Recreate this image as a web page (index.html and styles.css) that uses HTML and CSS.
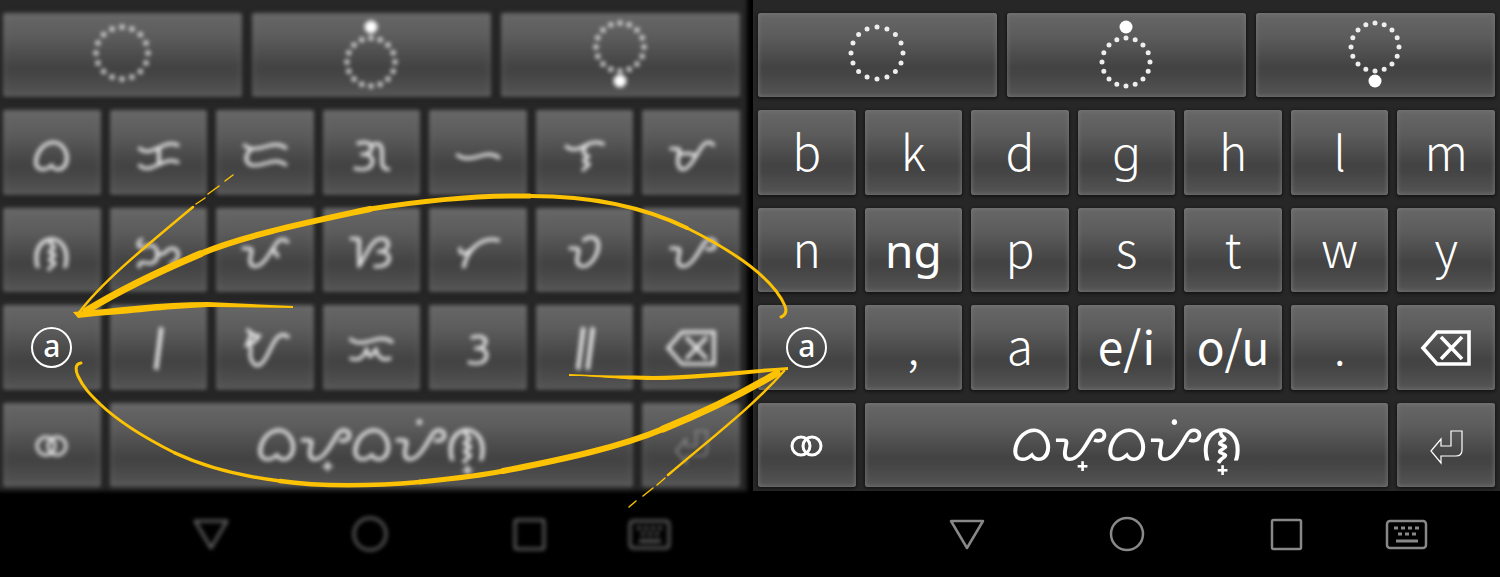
FILE: index.html
```html
<!DOCTYPE html>
<html lang="en">
<head>
<meta charset="utf-8">
<meta name="viewport" content="width=device-width, initial-scale=1">
<title>Baybayin keyboard layouts</title>
<link rel="stylesheet" href="styles.css">
</head>
<body>
<svg class="defs" aria-hidden="true">
  <symbol id="ring" viewBox="-35 -42 70 84"><circle class="dots" cx="-1" cy="-2" r="26" pathLength="16"/></symbol>
  <symbol id="ring-above" viewBox="-35 -42 70 84"><circle class="dots" cx="-1" cy="7" r="24" pathLength="16"/><circle class="solid" cx="-1" cy="-28" r="6.5"/></symbol>
  <symbol id="ring-below" viewBox="-35 -42 70 84"><circle class="dots" cx="-1" cy="-8" r="24" pathLength="16"/><circle class="solid" cx="-1" cy="26" r="6.5"/></symbol>
  <symbol id="vowel-sign" viewBox="-30 -30 60 60"><path class="line" stroke-width="3.6" d="M-18-18Q-14-12-6-11-10-4-18-2L-14-12M-15-1C-13 3-16 6-14 12-12 18-8 20-4 17 2 13 5 0 11-8 15-13 20-14 24-9"/></symbol>
  <symbol id="backspace" viewBox="-30 -30 60 60"><path class="line" stroke-width="3.6" d="M-23 1-9-15H23V17H-9ZM-5-10 16 12M16-10-5 12"/></symbol>
  <symbol id="enter" viewBox="-30 -30 60 60"><path class="line" stroke-width="1.2" d="M-15 6-5-6V1H5V-14H16V5Q16 11 10 11H-5V18Z"/></symbol>
  <symbol id="globe" viewBox="-30 -30 60 60"><circle class="line" stroke-width="3" cx="-6" cy="1" r="9"/><circle class="line" stroke-width="3" cx="5" cy="1" r="9"/></symbol>
  <symbol id="back" viewBox="-24 -24 48 48"><path class="line" stroke-width="2.5" stroke-linejoin="round" d="M-16-13H16L0 14Z"/></symbol>
  <symbol id="home" viewBox="-24 -24 48 48"><circle class="line" stroke-width="2.5" cx="-1" r="16"/></symbol>
  <symbol id="recent" viewBox="-24 -24 48 48"><rect class="line" stroke-width="2.5" x="-16" y="-14" width="29" height="29" rx="1.5"/></symbol>
  <symbol id="keyboard" viewBox="-24 -24 48 48"><rect class="line" stroke-width="2.5" x="-21" y="-13" width="39" height="27" rx="3"/><path class="line" stroke-width="3" d="M-14-6h4m3 0h4m3 0h4m3 0h4M-10 0h4m3 0h4m3 0h4M-12 7H10"/></symbol>
</svg>

<main class="stage">
  <section class="phone soft" aria-label="Baybayin layout">
    <div class="keys">
      <div class="row three">
        <button class="key" aria-label="No vowel mark"><svg class="mark"><use href="#ring"/></svg></button>
        <button class="key" aria-label="Mark above"><svg class="mark"><use href="#ring-above"/></svg></button>
        <button class="key" aria-label="Mark below"><svg class="mark"><use href="#ring-below"/></svg></button>
      </div>
      <div class="row">
        <button class="key"><span class="label">ᜊ</span></button><button class="key"><span class="label">ᜃ</span></button><button class="key"><span class="label">ᜇ</span></button><button class="key"><span class="label">ᜄ</span></button><button class="key"><span class="label">ᜑ</span></button><button class="key"><span class="label">ᜎ</span></button><button class="key"><span class="label">ᜋ</span></button>
      </div>
      <div class="row">
        <button class="key"><span class="label">ᜈ</span></button><button class="key"><span class="label">ᜅ</span></button><button class="key"><span class="label">ᜉ</span></button><button class="key"><span class="label">ᜐ</span></button><button class="key"><span class="label">ᜆ</span></button><button class="key"><span class="label">ᜏ</span></button><button class="key"><span class="label">ᜌ</span></button>
      </div>
      <div class="row">
        <button class="key"><span class="ringed">a</span></button><button class="key bar"><span class="label">᜵</span></button><button class="key" aria-label="Vowel a"><svg class="icon"><use href="#vowel-sign"/></svg></button><button class="key"><span class="label">ᜁ</span></button><button class="key"><span class="label">ᜂ</span></button><button class="key bar"><span class="label">᜶</span></button>
        <button class="key" aria-label="Backspace"><svg class="icon"><use href="#backspace"/></svg></button>
      </div>
      <div class="row">
        <button class="key" aria-label="Change keyboard"><svg class="icon"><use href="#globe"/></svg></button>
        <button class="key space"><span class="label">ᜊᜌ᜔ᜊᜌᜒᜈ᜔</span></button>
        <button class="key" aria-label="Enter"><svg class="icon faint"><use href="#enter"/></svg></button>
      </div>
    </div>
    <nav class="nav" aria-label="System">
      <button class="nav-btn" aria-label="Back"><svg><use href="#back"/></svg></button>
      <button class="nav-btn" aria-label="Home"><svg><use href="#home"/></svg></button>
      <button class="nav-btn" aria-label="Recent apps"><svg><use href="#recent"/></svg></button>
      <button class="nav-btn" aria-label="Keyboards"><svg><use href="#keyboard"/></svg></button>
    </nav>
  </section>

  <section class="phone" aria-label="Latin layout">
    <div class="keys">
      <div class="row three">
        <button class="key" aria-label="No vowel mark"><svg class="mark"><use href="#ring"/></svg></button>
        <button class="key" aria-label="Mark above"><svg class="mark"><use href="#ring-above"/></svg></button>
        <button class="key" aria-label="Mark below"><svg class="mark"><use href="#ring-below"/></svg></button>
      </div>
      <div class="row">
        <button class="key"><span class="label">b</span></button><button class="key"><span class="label">k</span></button><button class="key"><span class="label">d</span></button><button class="key single"><span class="label">g</span></button><button class="key"><span class="label">h</span></button><button class="key"><span class="label">l</span></button><button class="key"><span class="label">m</span></button>
      </div>
      <div class="row">
        <button class="key"><span class="label">n</span></button><button class="key strong single"><span class="label">ng</span></button><button class="key"><span class="label">p</span></button><button class="key"><span class="label">s</span></button><button class="key"><span class="label">t</span></button><button class="key"><span class="label">w</span></button><button class="key"><span class="label">y</span></button>
      </div>
      <div class="row">
        <button class="key"><span class="ringed">a</span></button><button class="key"><span class="label">,</span></button><button class="key"><span class="label">a</span></button><button class="key strong"><span class="label">e/i</span></button><button class="key strong"><span class="label">o/u</span></button><button class="key"><span class="label">.</span></button>
        <button class="key" aria-label="Backspace"><svg class="icon"><use href="#backspace"/></svg></button>
      </div>
      <div class="row">
        <button class="key" aria-label="Change keyboard"><svg class="icon"><use href="#globe"/></svg></button>
        <button class="key space"><span class="label">ᜊᜌ᜔ᜊᜌᜒᜈ᜔</span></button>
        <button class="key" aria-label="Enter"><svg class="icon"><use href="#enter"/></svg></button>
      </div>
    </div>
    <nav class="nav" aria-label="System">
      <button class="nav-btn" aria-label="Back"><svg><use href="#back"/></svg></button>
      <button class="nav-btn" aria-label="Home"><svg><use href="#home"/></svg></button>
      <button class="nav-btn" aria-label="Recent apps"><svg><use href="#recent"/></svg></button>
      <button class="nav-btn" aria-label="Keyboards"><svg><use href="#keyboard"/></svg></button>
    </nav>
  </section>

  <svg class="arrows" viewBox="0 0 1500 577" preserveAspectRatio="none" aria-hidden="true">
    <!-- sweep from the right key to the left key -->
    <path stroke-width="3" d="M781 317Q788 314 785 306C772 275 727 248 687 228"/>
    <path stroke-width="4" d="M687 228C640 205 585 196 530 196"/>
    <path stroke-width="5" d="M530 196C480 195 420 201 370 209"/>
    <path stroke-width="6" d="M370 209C310 222 245 235 200 254"/>
    <path stroke-width="7" d="M200 254C160 271 120 290 86 311"/>
    <path stroke-width="2.5" d="M78 314C100 284 140 251 193 207"/>
    <path stroke-width="1.5" d="M196 204 205 198M208 194 219 186M225 181 233 175"/>
    <path class="fill" d="M73 312C120 308 160 302 208 302L293 306V308L208 307C160 309 130 314 96 316L78 318Z"/>
    <!-- sweep from the left key to the right key -->
    <path stroke-width="3" d="M81 363C74 364 76 372 78 376C84 389 92 396 100 404C120 423 147 439 175 453"/>
    <path stroke-width="3.5" d="M175 453C207 468 240 476 280 481"/>
    <path stroke-width="4.5" d="M280 481C320 487 375 486 420 482"/>
    <path stroke-width="5" d="M420 482C450 479 480 476 503 471"/>
    <path stroke-width="6" d="M503 471C565 459 620 447 663 429"/>
    <path stroke-width="7" d="M663 429C710 410 745 392 777 373"/>
    <path class="fill" d="M569 374C600 376 630 375 653 376C690 376 740 370 788 367V370C740 375 690 380 653 380C620 380 600 376 569 376Z"/>
    <path stroke-width="2.5" d="M784 371C755 404 720 431 668 475"/>
    <path stroke-width="1.5" d="M665 478 657 485M653 488 643 496M636 501 629 507"/>
  </svg>
</main>
</body>
</html>
```
FILE: styles.css
```css
* { box-sizing: border-box; }

body {
  margin: 0;
  background: #000;
  font-family: "Noto Sans CJK SC", "Noto Sans", sans-serif;
}

button {
  margin: 0;
  padding: 0;
  border: 0;
  background: none;
  color: inherit;
  font: inherit;
}

.defs { position: absolute; width: 0; height: 0; }

.stage {
  position: relative;
  display: flex;
  gap: 6px;
  min-height: 100vh;
}

.phone {
  display: flex;
  flex: 1;
  flex-direction: column;
  min-width: 0;
}

.keys {
  position: relative;
  display: flex;
  flex: 1;
  flex-direction: column;
  gap: 13px;
  padding: 13px 5px 4px;
  background: #272727;
}

.row {
  display: grid;
  flex: 1;
  grid-template-columns: repeat(7, minmax(0, 1fr));
  gap: 9px;
}

.three {
  grid-template-columns: repeat(3, minmax(0, 1fr));
  gap: 10px;
}

.space { grid-column: span 5; }

.key {
  position: relative;
  display: flex;
  align-items: center;
  justify-content: center;
  min-height: 60px;
  color: #fff;
  font-size: 48px;
  font-weight: 300;
  line-height: 60px;
}

.key::before {
  content: "";
  position: absolute;
  inset: 0;
  border-radius: 3px;
  background: linear-gradient(#676767, #5c5c5c 28%, #434343 64%, #444 72%, #555);
  box-shadow: 0 1px 3px 1px #161616, inset 0 0 5px #7a7a7a;
}

.key > * { position: relative; }

.label { padding-bottom: 6px; }

.single { font-family: "Noto Sans", sans-serif; }
.single .label { padding: 0; }

.strong { font-size: 46px; font-weight: 400; }
.strong .label { padding-bottom: 4px; }
.strong.single .label { padding: 0; }

.key.space { font-size: 51px; }
.space .label { padding-bottom: 12px; }

.bar { font-size: 60px; font-weight: 700; }

.ringed {
  width: 41px;
  height: 41px;
  border: 2px solid #fff;
  border-radius: 50%;
  font-family: "Noto Sans", sans-serif;
  font-size: 30px;
  font-weight: 500;
  line-height: 33px;
  text-align: center;
}

.mark { width: 70px; height: 84px; }
.icon { width: 60px; height: 60px; }

.dots {
  fill: none;
  stroke: #eee;
  stroke-width: 5;
  stroke-linecap: round;
  stroke-dasharray: 0 1;
}

.solid { fill: #fff; }
.line { fill: none; stroke: currentColor; }

.nav {
  display: grid;
  grid-template-columns: 160fr 160fr 160fr 80fr;
  align-items: center;
  height: 86px;
  padding: 0 7% 0 18%;
  color: #888;
}

.nav-btn { display: flex; justify-content: center; }
.nav-btn svg { width: 48px; height: 48px; }

.soft .nav { padding: 0 7.5% 0 17.5%; }

.soft .keys { padding-right: 7px; padding-left: 3px; background: none; }

.soft .keys::before {
  content: "";
  position: absolute;
  inset: -8px 0 0 -8px;
  background: #272727;
  filter: blur(2px);
}

.soft .key::before,
.soft .key > :not(.ringed),
.soft .nav-btn svg { filter: blur(2px); }

.soft .label, .soft .icon { opacity: .85; }
.soft .nav-btn { opacity: .8; }
.soft .faint { opacity: .5; }

.arrows {
  position: absolute;
  inset: 0;
  width: 100%;
  height: 100%;
  fill: none;
  stroke: #fcc203;
  stroke-linecap: round;
  pointer-events: none;
}

.arrows .fill { fill: #fcc203; stroke: none; }
```
